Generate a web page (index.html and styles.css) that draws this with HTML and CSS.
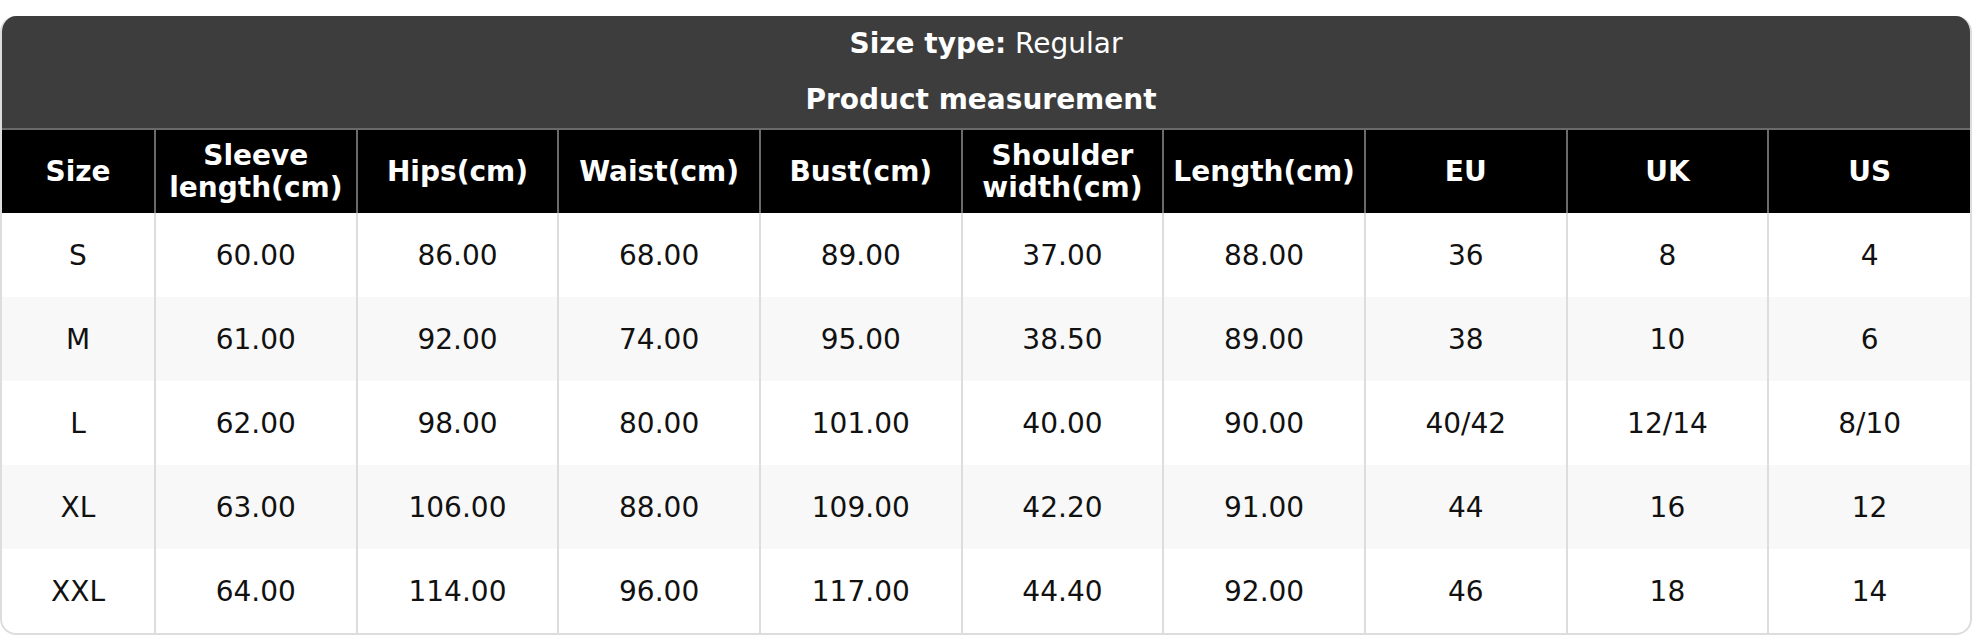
FILE: index.html
```html
<!DOCTYPE html>
<html>
<head>
<meta charset="utf-8">
<link rel="stylesheet" href="styles.css">
</head>
<body>
<div class="page">
  <div class="card">
    <div class="head">
      <div class="head-line"><b>Size type:</b> Regular</div>
      <div class="head-line head-title"><b>Product measurement</b></div>
    </div>
    <table class="sizes">
      <colgroup>
        <col class="col-first">
        <col><col><col><col><col><col><col><col><col>
      </colgroup>
      <thead>
        <tr>
          <th>Size</th>
          <th>Sleeve<br>length(cm)</th>
          <th>Hips(cm)</th>
          <th>Waist(cm)</th>
          <th>Bust(cm)</th>
          <th>Shoulder<br>width(cm)</th>
          <th>Length(cm)</th>
          <th>EU</th>
          <th>UK</th>
          <th>US</th>
        </tr>
      </thead>
      <tbody>
        <tr><td>S</td><td>60.00</td><td>86.00</td><td>68.00</td><td>89.00</td><td>37.00</td><td>88.00</td><td>36</td><td>8</td><td>4</td></tr>
        <tr><td>M</td><td>61.00</td><td>92.00</td><td>74.00</td><td>95.00</td><td>38.50</td><td>89.00</td><td>38</td><td>10</td><td>6</td></tr>
        <tr><td>L</td><td>62.00</td><td>98.00</td><td>80.00</td><td>101.00</td><td>40.00</td><td>90.00</td><td>40/42</td><td>12/14</td><td>8/10</td></tr>
        <tr><td>XL</td><td>63.00</td><td>106.00</td><td>88.00</td><td>109.00</td><td>42.20</td><td>91.00</td><td>44</td><td>16</td><td>12</td></tr>
        <tr><td>XXL</td><td>64.00</td><td>114.00</td><td>96.00</td><td>117.00</td><td>44.40</td><td>92.00</td><td>46</td><td>18</td><td>14</td></tr>
      </tbody>
    </table>
  </div>
</div>
</body>
</html>
```

FILE: styles.css
```css
html, body {
  margin: 0;
  padding: 0;
  background: #ffffff;
}

.page {
  padding-top: 16px;
  font-family: "DejaVu Sans", Verdana, sans-serif;
}

.card {
  width: 1972px;
  box-sizing: border-box;
  border: 2px solid #dddddd;
  border-top: none;
  border-radius: 16px;
  overflow: hidden;
  background: #ffffff;
}

.head {
  background: #3d3d3d;
  color: #ffffff;
  text-align: center;
  height: 112px;
  box-sizing: border-box;
  padding-top: 12px;
  font-size: 28px;
  margin: 0 -2px;
}

.head-line {
  line-height: 32px;
  height: 32px;
}

.head-line b {
  font-weight: bold;
}

.head-title {
  margin-top: 24px;
  padding-right: 10px;
}

.sizes {
  width: 100%;
  border-collapse: collapse;
  table-layout: fixed;
  font-size: 28px;
}

.col-first {
  width: 153px;
}

.sizes th {
  background: #000000;
  color: #ffffff;
  font-weight: bold;
  line-height: 32px;
  height: 84px;
  padding: 0 2px;
  box-sizing: border-box;
  border-top: 2px solid #6a6a6a;
  border-left: 2px solid #6a6a6a;
  text-align: center;
  vertical-align: middle;
}

.sizes th:first-child {
  border-left: none;
}

.sizes td {
  height: 84px;
  padding: 2px 4px 0;
  box-sizing: border-box;
  text-align: center;
  vertical-align: middle;
  color: #111111;
  line-height: 32px;
  border-left: 2px solid #dddddd;
}

.sizes td:first-child {
  border-left: none;
}

.sizes tbody tr:nth-child(even) td {
  background: #f8f8f8;
}
```
